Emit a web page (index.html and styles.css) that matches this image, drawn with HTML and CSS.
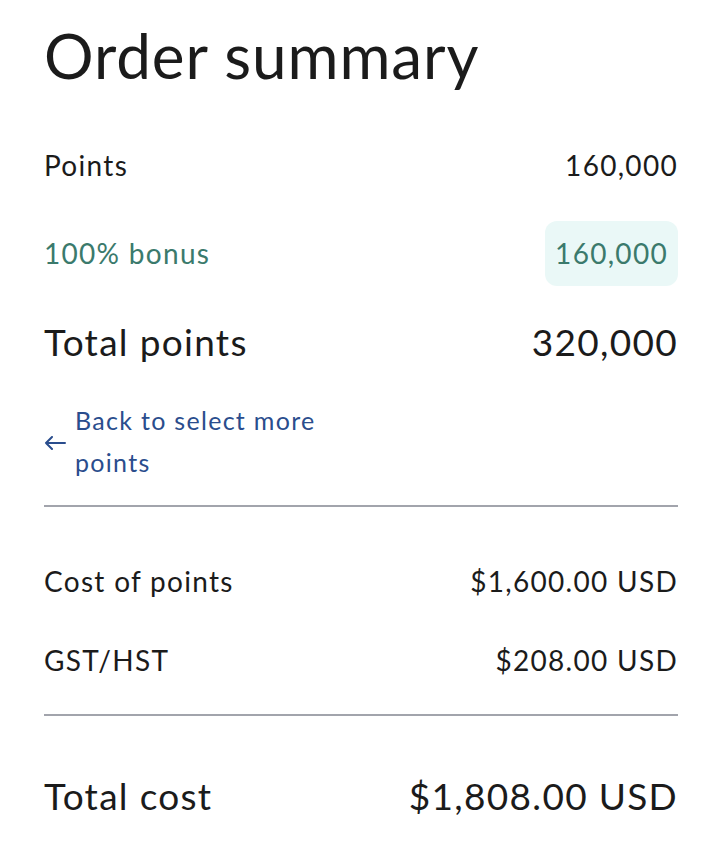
FILE: index.html
```html
<!DOCTYPE html>
<html lang="en">
<head>
  <meta charset="UTF-8" />
  <meta name="viewport" content="width=device-width, initial-scale=1" />
  <title>Order summary</title>
  <link rel="stylesheet" href="styles.css">
</head>
<body>
  <div class="summary">
    <h1>Order summary</h1>

    <div class="row">
      <span>Points</span>
      <span>160,000</span>
    </div>
    <div class="row bonus">
      <span>100% bonus</span>
      <span class="badge">160,000</span>
    </div>
    <div class="row big">
      <span>Total points</span>
      <span>320,000</span>
    </div>

    <a class="back-link" href="#">
      <span class="arrow">
        <svg width="22" height="14" viewBox="0 0 22 14" fill="none" stroke="currentColor" stroke-width="2" stroke-linecap="round" stroke-linejoin="round">
          <path d="M21 7H2M8 1L2 7l6 6" />
        </svg>
      </span>
      <span class="back-text">Back to select more points</span>
    </a>

    <hr class="divider">

    <div class="row cost first-cost">
      <span>Cost of points</span>
      <span>$1,600.00 USD</span>
    </div>
    <div class="row cost">
      <span>GST/HST</span>
      <span>$208.00 USD</span>
    </div>

    <hr class="divider divider-low">

    <div class="row big total">
      <span>Total cost</span>
      <span>$1,808.00 USD</span>
    </div>
  </div>
</body>
</html>
```

FILE: styles.css
```css
body {
  margin: 0;
  font-family: Lato, "Liberation Sans", sans-serif;
  color: #1b1b1b;
  background: #ffffff;
}

.summary {
  padding: 18px 44px 0;
}

h1 {
  font-size: 62px;
  font-weight: 400;
  line-height: 74px;
  margin: 0 0 29px;
  letter-spacing: 0.9px;
}

.row {
  display: flex;
  justify-content: space-between;
  align-items: center;
  height: 88px;
  font-size: 28px;
  letter-spacing: 1.3px;
}

.bonus {
  color: #3b7a6c;
}

.badge {
  background: #eaf8f7;
  border-radius: 12px;
  padding: 0 10px;
  height: 65px;
  display: flex;
  align-items: center;
}

.big {
  font-size: 37px;
  letter-spacing: 1.3px;
}

.back-link {
  display: flex;
  align-items: center;
  gap: 9px;
  color: #2a4d8d;
  text-decoration: none;
  font-size: 25px;
  line-height: 42px;
  letter-spacing: 1.3px;
  margin-top: 14px;
}

.arrow {
  display: flex;
  padding-top: 4px;
}

.back-text {
  max-width: 275px;
}

.divider {
  border: none;
  border-top: 2px solid #a2a4ac;
  margin: 22px 0 0;
}

.divider-low {
  margin-top: 15px;
}

.cost {
  height: 79px;
}

.first-cost {
  margin-top: 34px;
}

.total {
  margin-top: 35px;
}
```
